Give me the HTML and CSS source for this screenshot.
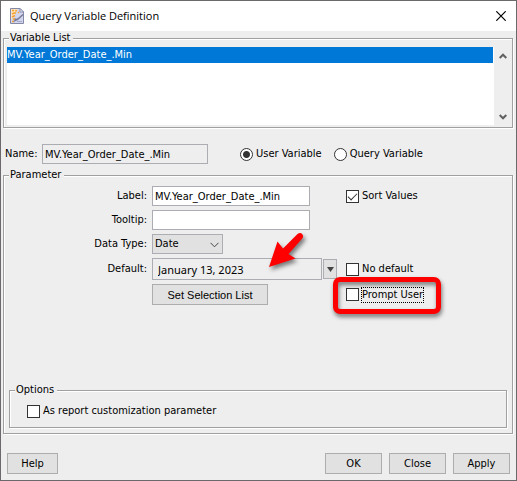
FILE: index.html
```html
<!DOCTYPE html>
<html lang="en">
<head>
<meta charset="utf-8">
<title>Query Variable Definition</title>
<link rel="stylesheet" href="styles.css">
</head>
<body>
<main class="dialog">
  <header class="titlebar">
    <svg class="app-icon" width="16" height="16" viewBox="0 0 16 16" aria-hidden="true">
      <path d="M1.500 .5h9.500l3.500 3.500v11.500h-13z" fill="#d3d7ee" stroke="#8589a8"/>
      <path d="M2 1h7L2 12z" fill="#fbe6c0"/>
      <path d="M11 .5v3.500h3.500z" fill="#fff" stroke="#8589a8"/>
      <path d="M3 2.500h2M7.500 2l-1 1.500M3 6l2-1h2M9 4l1 1M3 9l3-1.500M4 11.500l2-1M3 13.500h2" stroke="#f5a030" stroke-width="1.600" fill="none"/>
      <path d="M14 6.500l-5 4.500-3 1.500 1-2" stroke="#777c99" stroke-width="1.500" fill="none"/>
      <path d="M8 13.500h5" stroke="#a4a9ca"/>
    </svg>
    <h1 class="title">Query Variable Definition</h1>
    <button class="close" type="button" aria-label="Close window">
      <svg width="10" height="10" viewBox="0 0 10 10"><path d="M.3 .3l9.400 9.400M9.700 .3L.3 9.700" stroke="#000" stroke-width="1.200"/></svg>
    </button>
  </header>
  <form class="content">
    <fieldset class="group variables">
      <legend>Variable List</legend>
      <div class="list">
        <ul class="items" role="listbox" aria-label="Variable List">
          <li class="item" role="option" aria-selected="true">MV.Year_Order_Date_.Min</li>
        </ul>
        <div class="scrollbar">
          <button class="scroll" type="button" aria-label="Scroll up"><svg width="8" height="6" viewBox="0 0 8 6"><path d="M.7 5L4 1.700 7.300 5" fill="none" stroke="#606060" stroke-width="2"/></svg></button>
          <button class="scroll" type="button" aria-label="Scroll down"><svg width="8" height="6" viewBox="0 0 8 6"><path d="M.7 1L4 4.300 7.300 1" fill="none" stroke="#606060" stroke-width="2"/></svg></button>
        </div>
      </div>
    </fieldset>

    <div class="name-row">
      <label class="name-label" for="name">Name:</label>
      <input class="text name" id="name" type="text" value="MV.Year_Order_Date_.Min" readonly>
      <label class="choice"><input class="radio" type="radio" name="kind" checked>User Variable</label>
      <label class="choice"><input class="radio" type="radio" name="kind">Query Variable</label>
    </div>

    <fieldset class="group parameter">
      <legend>Parameter</legend>
      <div class="fields">
        <label class="caption" for="label">Label:</label>
        <input class="text entry" id="label" type="text" value="MV.Year_Order_Date_.Min">
        <label class="choice"><input class="check" type="checkbox" checked>Sort Values</label>

        <label class="caption" for="tooltip">Tooltip:</label>
        <input class="text entry" id="tooltip" type="text">
        <span></span>

        <label class="caption" for="type">Data Type:</label>
        <div class="dropdown">
          <select class="select" id="type"><option>Date</option></select>
          <svg class="chevron" width="9" height="6" viewBox="0 0 9 6" aria-hidden="true"><path d="M.5 .8l4 4 4-4" fill="none" stroke="#444"/></svg>
        </div>
        <span></span>

        <label class="caption" for="default">Default:</label>
        <div class="date">
          <input class="text date-text" id="default" type="text" value="January 13, 2023">
          <button class="date-open" type="button" aria-label="Choose date"><svg width="7" height="5" viewBox="0 0 7 5"><path d="M0 0h7L3.500 5z" fill="#444"/></svg></button>
          <svg class="arrow" width="48" height="48" viewBox="0 0 48 48" aria-hidden="true">
            <path d="M5 37L13.500 11.500 19 18.500 33.500 4Q36.500 2 38.500 4.500 40 6.600 38 8.700L24.500 24 31.500 28.500z" fill="red"/>
          </svg>
        </div>
        <label class="choice"><input class="check" type="checkbox">No default</label>

        <span></span>
        <button class="button selection" type="button">Set Selection List</button>
        <label class="choice prompt"><input class="check" type="checkbox"><span class="focused">Prompt User</span></label>
      </div>

      <fieldset class="group options">
        <legend>Options</legend>
        <label class="choice"><input class="check" type="checkbox">As report customization parameter</label>
      </fieldset>
    </fieldset>

    <footer class="actions">
      <button class="button help" type="button">Help</button>
      <button class="button action" type="button">OK</button>
      <button class="button action" type="button">Close</button>
      <button class="button action" type="button">Apply</button>
    </footer>
  </form>
</main>
</body>
</html>
```
FILE: styles.css
```css
*, *::before, *::after { box-sizing: border-box; }

body {
  margin: 0;
  background: #eee;
  color: #000;
  font: 11px/14px "DejaVu Sans Condensed", "DejaVu Sans", sans-serif;
}

input, select, button { font: inherit; color: inherit; margin: 0; }
svg { display: block; }

.dialog {
  display: flex;
  flex-direction: column;
  min-height: 100vh;
  border: 1px solid #6b696b;
}

.titlebar {
  display: flex;
  align-items: center;
  height: 30px;
  padding: 0 10px 0 8px;
  background: #fff;
}
.title {
  flex: 1;
  margin: 0 0 0 5px;
  font: 11px/16px "Open Sans", sans-serif;
}
.close { padding: 0; border: 0; background: none; }

.content {
  flex: 1;
  display: flex;
  flex-direction: column;
  padding: 0 3px 0 2px;
}

.group {
  min-width: 0;
  margin: 0;
  border: 1px solid #a0a0a0;
  box-shadow: 1px 1px 0 #fff, inset 1px 1px 0 #fff;
}
.group > legend {
  padding: 0 3px 0 1px;
  background: #eee;
}

.variables { padding: 2px 1px 2px 3px; }
.variables > legend { margin-left: 2px; }
.list { display: flex; height: 78px; }
.items {
  flex: 1;
  margin: 0;
  padding: 0 1px 0 0;
  list-style: none;
  background: #fff;
}
.item { padding: 1px 0; background: #0078d7; color: #fff; }
.scrollbar {
  display: flex;
  flex-direction: column;
  justify-content: space-between;
  width: 17px;
}
.scroll {
  display: grid;
  place-items: center;
  height: 17px;
  padding: 0;
  border: 0;
  background: none;
}

.name-row {
  display: flex;
  align-items: center;
  padding: 16px 2px 4px;
}
.name-label { width: 33px; }

.text {
  min-width: 0;
  height: 20px;
  padding: 0 2px;
  border: 1px solid #abadb3;
  border-radius: 0;
  background: #fff;
}
.name { width: 166px; margin: 0 32px 0 4px; background: #eee; }

.choice { display: flex; align-items: center; gap: 3px; }
.choice + .choice { margin-left: 12px; }

.radio, .check {
  appearance: none;
  flex: none;
  width: 13px;
  height: 13px;
  border: 1px solid #333;
  background: #fff;
}
.radio { border-radius: 50%; }
.radio:checked { background: radial-gradient(circle, #333 3px, #fff 4px); }
.check:checked::after {
  content: "";
  display: block;
  width: 9px;
  height: 5px;
  margin: 2px 1px;
  border: solid #333;
  border-width: 0 0 1px 1px;
  transform: rotate(-45deg);
}

.parameter { padding: 4px 5px 5px; }
.fields {
  display: grid;
  grid-template-columns: 138px 185px 1fr;
  column-gap: 5px;
  row-gap: 4px;
  align-items: center;
}
.fields .choice { margin-left: 4px; }
.caption { text-align: right; }
.entry { width: 158px; }

.dropdown { position: relative; width: 71px; }
.select {
  appearance: none;
  display: block;
  width: 100%;
  height: 20px;
  padding: 0 2px;
  border: 1px solid #abadb3;
  border-radius: 0;
  background: #e1e1e1;
}
.chevron { position: absolute; right: 4px; top: 8px; pointer-events: none; }

.date { position: relative; display: flex; align-items: center; }
.date-text { width: 170px; height: 22px; padding: 0 5px; background: #eee; font-family: "Noto Sans", sans-serif; }
.date-open {
  display: grid;
  place-items: center;
  width: 14px;
  height: 20px;
  margin-left: 1px;
  padding: 0;
  border: 1px solid #abadb3;
  background: #e1e1e1;
}
.arrow {
  position: absolute;
  left: 112px;
  top: -28px;
  overflow: visible;
  pointer-events: none;
  filter: drop-shadow(2px 3px 2px rgba(0, 0, 0, .5));
}

.button {
  height: 21px;
  padding: 0;
  border: 1px solid #adadad;
  background: #e1e1e1;
}
.selection { width: 116px; font-family: "Liberation Sans", sans-serif; }

.prompt { position: relative; }
.prompt::after {
  content: "";
  position: absolute;
  left: -13px;
  top: -11px;
  width: 108px;
  height: 37px;
  border: 5px solid red;
  border-radius: 7px;
  filter: drop-shadow(1px 3px 2px rgba(0, 0, 0, .5));
  pointer-events: none;
}
.focused { outline: 1px dotted #000; }

.options { margin-top: 78px; padding: 7px 5px 9px; }
.options > .choice { margin-left: 12px; }

.actions {
  display: flex;
  gap: 7px;
  margin-top: auto;
  padding: 18px 3px 6px 4px;
}
.help { width: 51px; margin-right: auto; }
.action { width: 57px; }
```
